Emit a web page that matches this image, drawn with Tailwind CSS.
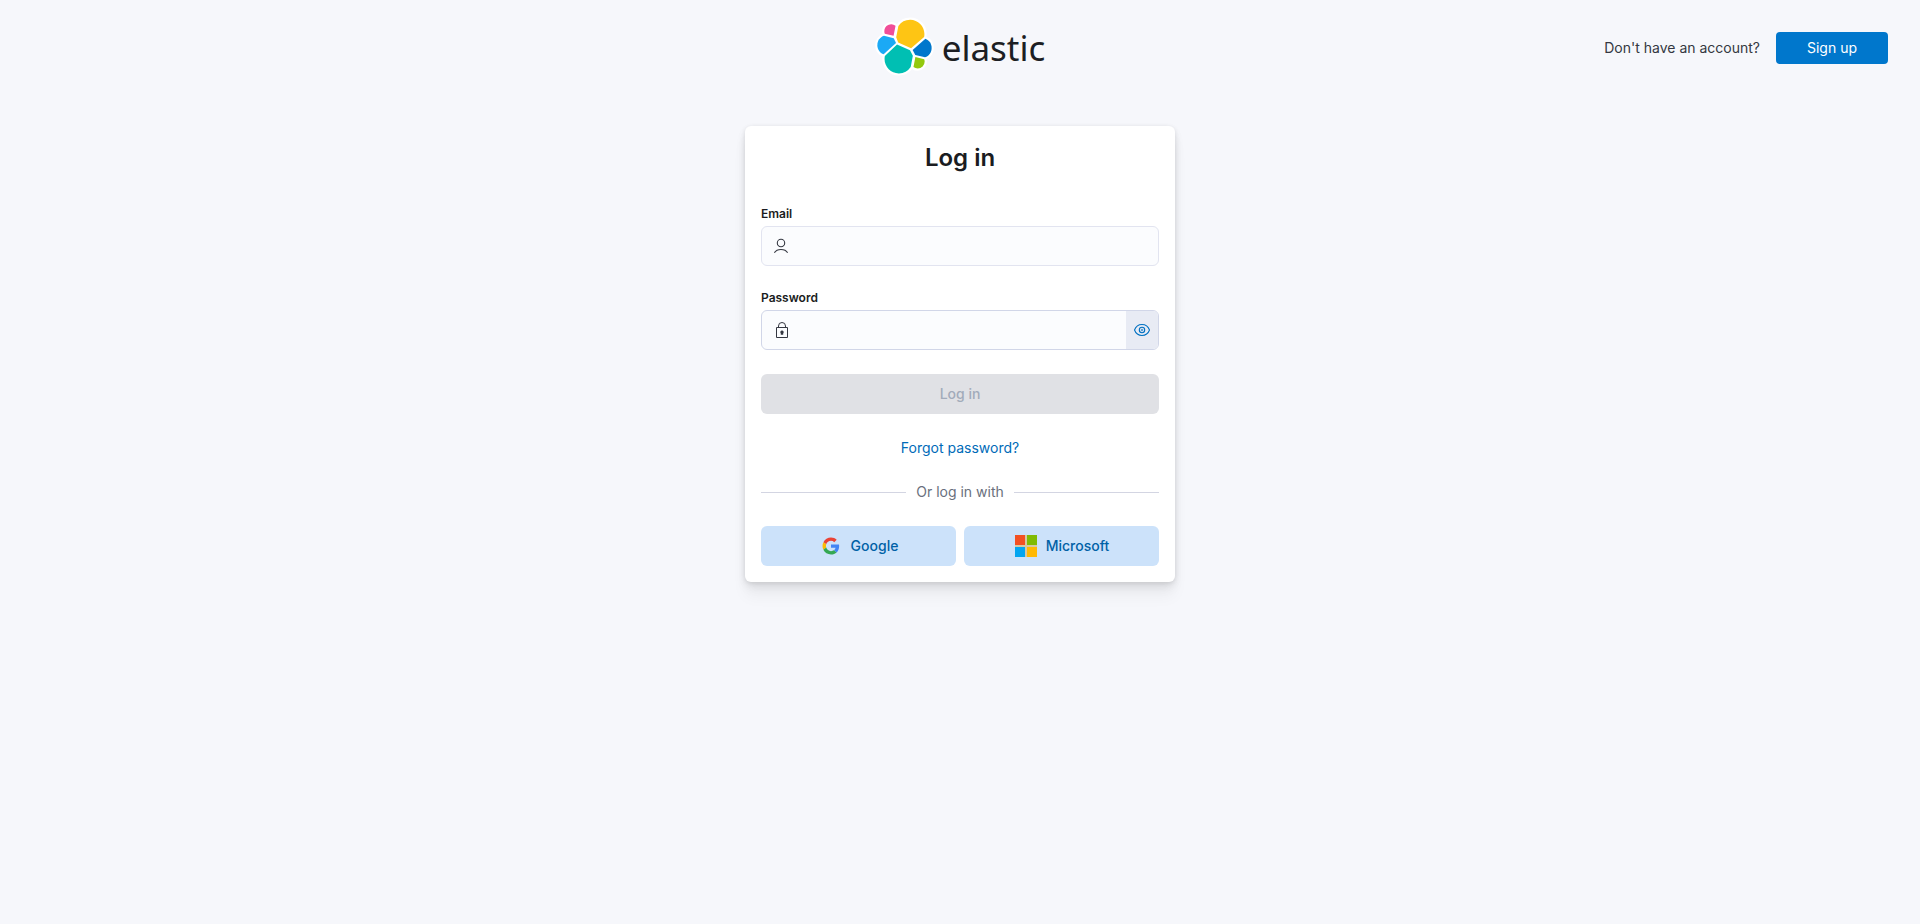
<!DOCTYPE html>
<html lang="en">
<head>
<meta charset="utf-8">
<meta name="viewport" content="width=device-width, initial-scale=1">
<title>Log in | Elastic</title>
<script src="https://cdn.jsdelivr.net/npm/@tailwindcss/browser@4"></script>
</head>
<body class="min-h-screen bg-[#f6f7fb] font-['Inter',sans-serif] text-sm text-[#343741]">
<header class="grid grid-cols-[1fr_auto_1fr] items-center px-8 h-24">
  <a href="#" aria-label="elastic" class="col-start-2 flex items-center gap-2 pb-1 text-[#1c1e23]">
    <svg class="size-[59px] shrink-0" viewBox="0 0 32 32" aria-hidden="true">
      <g stroke="#fff" stroke-width="2.4" stroke-linejoin="round" fill="#fff">
        <path d="M12.58 13.787l7.002 3.211 7.066-6.213a7.849 7.849 0 0 0 .152-1.557c0-4.287-3.472-7.776-7.74-7.776a7.71 7.71 0 0 0-6.38 3.396l-1.176 6.12z"/>
        <path d="M5.333 21.215a7.932 7.932 0 0 0-.153 1.567c0 4.3 3.484 7.799 7.765 7.799a7.743 7.743 0 0 0 6.42-3.417l1.166-6.085-1.556-2.984-7.03-3.211z"/>
        <path d="M5.288 9.067l4.8 1.137L11.14 4.73a3.785 3.785 0 0 0-6.09 3.012c0 .45.082.904.238 1.325z"/>
        <path d="M4.872 10.214c-2.144.711-3.6 2.779-3.6 5.044 0 2.205 1.36 4.173 3.4 4.953l6.734-6.102-1.236-2.65z"/>
        <path d="M20.873 27.186a3.754 3.754 0 0 0 2.283.78 3.785 3.785 0 0 0 3.78-3.79c0-.466-.08-.916-.237-1.326l-4.797-1.126z"/>
        <path d="M21.848 20.563l5.28 1.239c2.146-.711 3.6-2.779 3.6-5.045 0-2.2-1.362-4.168-3.4-4.942l-6.91 6.07z"/>
      </g>
      <path fill="#fec514" d="M12.58 13.787l7.002 3.211 7.066-6.213a7.849 7.849 0 0 0 .152-1.557c0-4.287-3.472-7.776-7.74-7.776a7.71 7.71 0 0 0-6.38 3.396l-1.176 6.12z"/>
      <path fill="#00bfb3" d="M5.333 21.215a7.932 7.932 0 0 0-.153 1.567c0 4.3 3.484 7.799 7.765 7.799a7.743 7.743 0 0 0 6.42-3.417l1.166-6.085-1.556-2.984-7.03-3.211z"/>
      <path fill="#f04e98" d="M5.288 9.067l4.8 1.137L11.14 4.73a3.785 3.785 0 0 0-6.09 3.012c0 .45.082.904.238 1.325z"/>
      <path fill="#1ba9f5" d="M4.872 10.214c-2.144.711-3.6 2.779-3.6 5.044 0 2.205 1.36 4.173 3.4 4.953l6.734-6.102-1.236-2.65z"/>
      <path fill="#93c90e" d="M20.873 27.186a3.754 3.754 0 0 0 2.283.78 3.785 3.785 0 0 0 3.78-3.79c0-.466-.08-.916-.237-1.326l-4.797-1.126z"/>
      <path fill="#0077cc" d="M21.848 20.563l5.28 1.239c2.146-.711 3.6-2.779 3.6-5.045 0-2.2-1.362-4.168-3.4-4.942l-6.91 6.07z"/>
    </svg>
    <span class="pt-1 font-['Noto_Sans',sans-serif] text-[35px] leading-10">elastic</span>
  </a>
  <div class="flex items-center justify-end gap-4">
    <span>Don't have an account?</span>
    <a href="#" class="flex h-8 w-28 items-center justify-center rounded bg-[#0077cc] text-white">Sign up</a>
  </div>
</header>
<main class="px-4 pt-[30px]">
  <form class="mx-auto flex w-full max-w-[430px] flex-col rounded-md bg-white p-4 shadow-[0_1px_4px_rgb(0_0_0/0.08),0_3px_8px_rgb(0_0_0/0.06),0_6px_12px_rgb(0_0_0/0.05),0_15px_15px_rgb(0_0_0/0.04)]">
    <h1 class="text-center text-2xl font-semibold text-[#1a1c21]">Log in</h1>
    <label for="email" class="mt-8 text-xs font-semibold text-[#1a1c21]">Email</label>
    <div class="mt-1 flex h-10 items-center rounded-md border border-[#e2e4f0] bg-[#fbfcfe]">
      <svg class="ml-3 size-4 shrink-0" viewBox="0 0 16 16" fill="none" stroke="#343741" stroke-width="1.1" aria-hidden="true"><circle cx="7" cy="5" r="3.7"/><path d="M.4 14.700C1.700 12.600 4 11.500 7 11.500s5.300 1.100 6.600 3.200"/></svg>
      <input id="email" type="email" class="h-full min-w-0 flex-1 bg-transparent px-3 outline-none">
    </div>
    <label for="password" class="mt-6 text-xs font-semibold text-[#1a1c21]">Password</label>
    <div class="mt-1 flex h-10 items-center overflow-hidden rounded-md border border-[#d1d6e8] bg-[#fbfcfe]">
      <svg class="ml-3 size-4 shrink-0" viewBox="0 0 16 16" fill="none" stroke="#343741" aria-hidden="true"><path d="M2.500 5.500h11v10h-11zM4.500 5.500V4a3.500 3.500 0 0 1 7 0v1.500"/><path fill="#343741" stroke="none" d="M8 8.500a1.700 1.700 0 0 1 1.200 2.900V12.800H6.800v-1.400A1.700 1.700 0 0 1 8 8.500z"/></svg>
      <input id="password" type="password" class="h-full min-w-0 flex-1 bg-transparent px-3 outline-none">
      <button type="button" aria-label="Show password" class="flex h-full w-8 items-center justify-center bg-[#e8ebf4] text-[#0071c2]">
        <svg class="size-4" viewBox="0 0 16 16" fill="none" stroke="currentColor" stroke-width="1.1" aria-hidden="true"><path d="M.5 8C1.800 4.500 4.600 2.500 8 2.500S14.200 4.500 15.500 8c-1.300 3.500-4.100 5.500-7.500 5.500S1.800 11.500.5 8z"/><circle cx="8" cy="8" r="2.700"/><circle cx="8" cy="8" r=".8" stroke-width=".7"/></svg>
      </button>
    </div>
    <button type="submit" disabled class="mt-6 h-10 rounded-md bg-[#e0e1e5] font-medium text-[#a2abba]">Log in</button>
    <a href="#" class="mt-6 self-center text-[#006bb8]">Forgot password?</a>
    <div class="mt-6 flex items-center gap-2.5 text-[#69707d]">
      <span class="h-px flex-1 bg-[#d3d5e2]"></span>Or log in with<span class="h-px flex-1 bg-[#d3d5e2]"></span>
    </div>
    <div class="mt-6 grid grid-cols-2 gap-2 font-medium text-[#0061a6]">
      <button type="button" class="flex h-10 items-center justify-center gap-2 rounded-md bg-[#cce2fa]">
        <svg class="size-6" viewBox="0 0 24 24" aria-hidden="true"><g transform="translate(3.500 3.500) scale(.354)"><path fill="#ea4335" d="M24 9.500c3.540 0 6.710 1.220 9.210 3.600l6.850-6.850C35.900 2.380 30.470 0 24 0 14.620 0 6.510 5.380 2.560 13.220l7.980 6.190C12.430 13.720 17.740 9.500 24 9.500z"/><path fill="#4285f4" d="M46.980 24.550c0-1.570-.15-3.090-.38-4.550H24v9.020h12.940c-.58 2.960-2.260 5.480-4.780 7.180l7.730 6c4.510-4.180 7.090-10.360 7.090-17.650z"/><path fill="#fbbc05" d="M10.530 28.590c-.48-1.450-.76-2.990-.76-4.590s.27-3.140.76-4.590l-7.980-6.190C.92 16.460 0 20.120 0 24s.92 7.540 2.560 10.780z"/><path fill="#34a853" d="M24 48c6.480 0 11.930-2.130 15.890-5.810l-7.730-6c-2.150 1.450-4.920 2.300-8.160 2.300-6.260 0-11.570-4.220-13.470-9.910l-7.980 6.190C6.510 42.620 14.620 48 24 48z"/></g></svg>
        Google
      </button>
      <button type="button" class="flex h-10 items-center justify-center gap-2 rounded-md bg-[#cce2fa]">
        <svg class="size-6" viewBox="0 0 24 24" aria-hidden="true"><path fill="#d6c9a4" d="M1 1h22v22H1z"/><path fill="#f35022" d="M1 1h10v10H1z"/><path fill="#80bb03" d="M13 1h10v10H13z"/><path fill="#03a5f0" d="M1 13h10v10H1z"/><path fill="#ffb903" d="M13 13h10v10H13z"/></svg>
        Microsoft
      </button>
    </div>
  </form>
</main>
</body>
</html>
